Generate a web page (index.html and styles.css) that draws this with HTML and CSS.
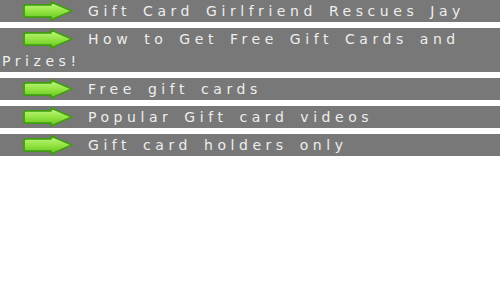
FILE: index.html
```html
<!DOCTYPE html>
<html lang="en">
  <head>
    <meta charset="UTF-8" />
    <meta name="viewport" content="width=device-width, initial-scale=1.0" />
    <title>Gift Cards</title>
    <link rel="stylesheet" href="styles.css">
  </head>
  <body>
    <svg width="0" height="0" class="defs">
      <defs>
        <linearGradient id="arrowFill" x1="0" y1="0" x2="0" y2="1">
          <stop offset="0" stop-color="#c2f882" />
          <stop offset="0.5" stop-color="#95e444" />
          <stop offset="1" stop-color="#62c41c" />
        </linearGradient>
        <symbol id="arrow" viewBox="0 0 50 20">
          <path d="M3 3.8 H28 V1 L49 10 L28 19 V16.2 H3 Q1 16.2 1 14.2 V5.8 Q1 3.8 3 3.8 Z" fill="url(#arrowFill)" stroke="#3f9c12" stroke-width="1.8" stroke-linejoin="round" />
        </symbol>
      </defs>
    </svg>

    <div class="list">
      <div class="item"><svg class="arrow"><use href="#arrow" /></svg>Gift Card Girlfriend Rescues Jay</div>
      <div class="item"><svg class="arrow"><use href="#arrow" /></svg>How to Get Free Gift Cards and Prizes!</div>
      <div class="item"><svg class="arrow"><use href="#arrow" /></svg>Free gift cards</div>
      <div class="item"><svg class="arrow"><use href="#arrow" /></svg>Popular Gift card videos</div>
      <div class="item"><svg class="arrow"><use href="#arrow" /></svg>Gift card holders only</div>
    </div>
  </body>
</html>
```

FILE: styles.css
```css
body {
  margin: 0;
  padding: 0;
  background-color: white;
  font-family: 'DejaVu Sans', sans-serif;
}

.defs {
  position: absolute;
}

.list {
  display: flex;
  flex-direction: column;
  gap: 6px;
}

.item {
  background-color: #787878;
  color: #eeeeee;
  font-size: 14px;
  line-height: 22px;
  letter-spacing: 4.55px;
  word-spacing: 3px;
  padding-left: 2px;
}

.arrow {
  width: 50px;
  height: 20px;
  vertical-align: -5px;
  margin-left: 21px;
  margin-right: 15px;
}
```
